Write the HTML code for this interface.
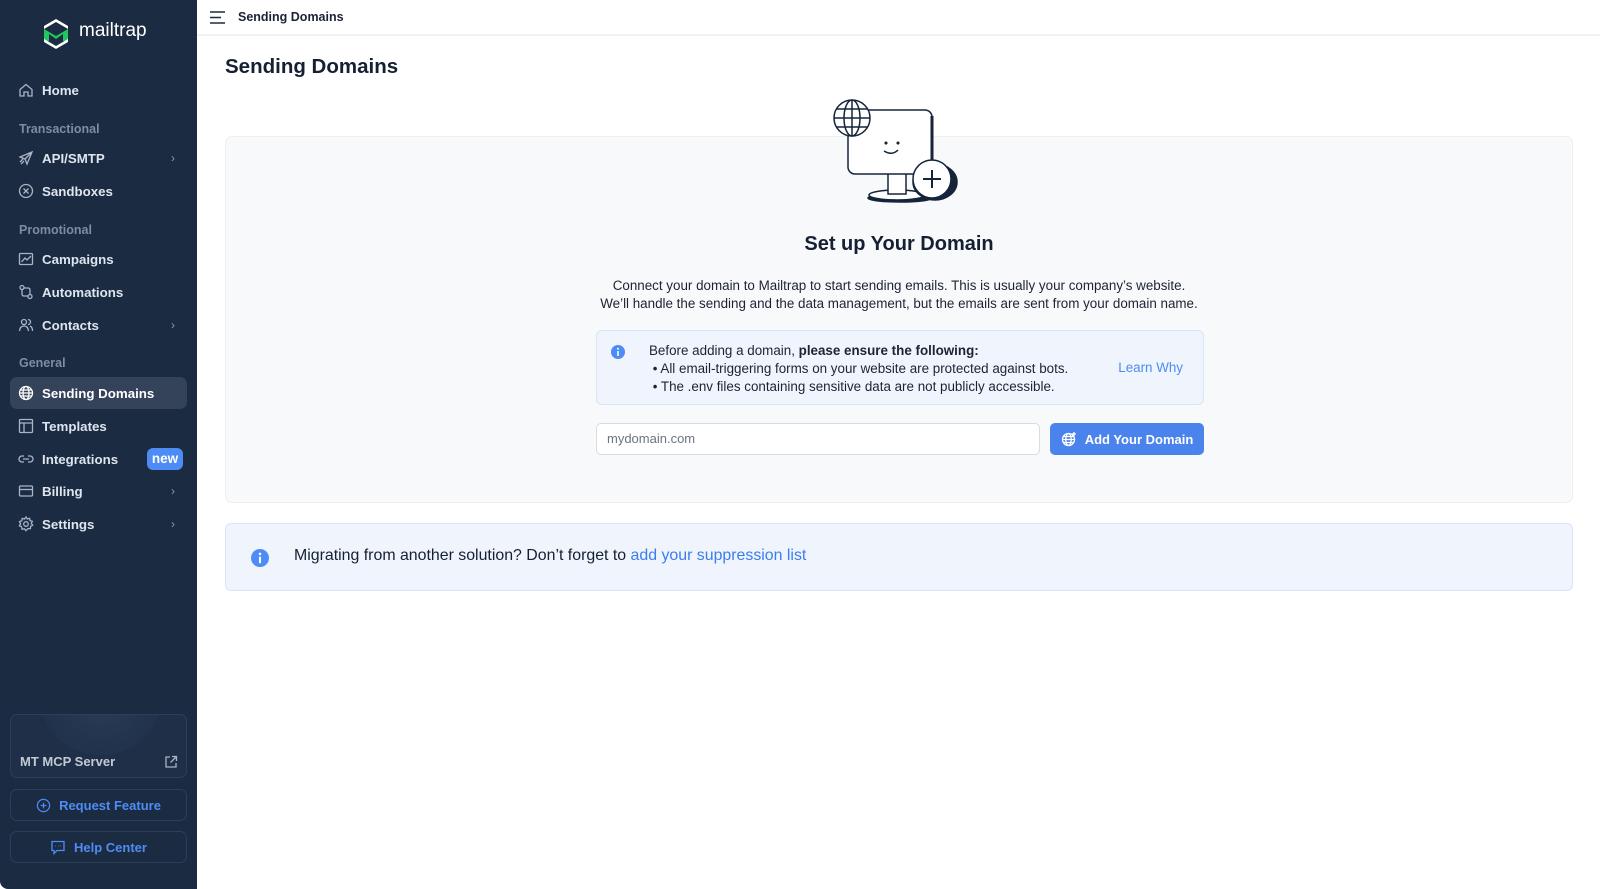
<!DOCTYPE html>
<html><head><meta charset="utf-8">
<style>
*{box-sizing:border-box;margin:0;padding:0}
body{width:1600px;height:889px;overflow:hidden;background:#fff;font-family:"Liberation Sans",sans-serif;color:#0f1b2d;position:relative}
.sb{position:absolute;left:0;top:0;width:197px;height:889px;background:#1b2b42;border-bottom-left-radius:8px}
.sb .it{position:absolute;left:10px;width:177px;height:32px;display:flex;align-items:center;padding-left:8px;color:#dfe5ee;font-size:13.3px;font-weight:bold;border-radius:7px}
.sb .it svg{width:16px;height:16px;margin-right:8px;flex:none}
.sb .it .ch{position:absolute;right:12px;color:#8c99ab;font-size:12px;font-weight:normal}
.sb .sec{position:absolute;left:19px;color:#7f8c9f;font-size:12.5px;font-weight:bold}
.sb .act{background:#34425a;color:#fff}
.new{position:absolute;left:147px;top:448px;width:36px;height:22px;border-radius:6px;background:#4e8cf5;color:#fff;font-size:13.5px;font-weight:bold;text-align:center;line-height:22px}
.box{position:absolute;left:10px;width:177px;border:1px solid #2e3e56;border-radius:7px}
.top{position:absolute;left:197px;top:0;right:0;height:36px;border-bottom:2px solid #f0f1f3}
.card{position:absolute;left:225px;top:136px;width:1348px;height:367px;background:#f8f9fa;border:1px solid #eeeff1;border-radius:7px}
.ban{position:absolute;left:225px;top:523px;width:1348px;height:68px;background:#eff4fd;border:1px solid #d9e4f7;border-radius:6px}
.c{position:absolute;left:0;width:100%;text-align:center}
</style></head><body>
<div class="sb">
  <svg style="position:absolute;left:40px;top:17px" width="32" height="33" viewBox="0 0 32 33"><path d="M16 2 L28 9 L28 12 L16 5 L4 12 L4 9Z" fill="#fff"/><path d="M4 12 L4 24 L9 24 L9 17 L16 22 L23 17 L23 24 L28 24 L28 12 L16 19Z" fill="#22c55e"/><path d="M4 25 L16 32 L28 25 L28 22 L16 29 L4 22Z" fill="#fff"/></svg>
  <div style="position:absolute;left:79px;top:20px;color:#fff;font-size:19px;font-weight:normal">mailtrap</div>
  <div class="it" style="top:74px"><svg viewBox="0 0 16 16" fill="none" stroke="#aab4c3" stroke-width="1.3"><path d="M2 7.5L8 2.5L14 7.5V14H10V10H6V14H2Z"/></svg>Home</div>
  <div class="sec" style="top:122px">Transactional</div>
  <div class="it" style="top:142px"><svg viewBox="0 0 16 16" fill="none" stroke="#aab4c3" stroke-width="1.3"><path d="M14 2L2 7L7 9L9 14Z M7 9L14 2 M2 12L5 9 M3 14L6 11"/></svg>API/SMTP<span class="ch">›</span></div>
  <div class="it" style="top:175px"><svg viewBox="0 0 16 16" fill="none" stroke="#aab4c3" stroke-width="1.3"><circle cx="8" cy="8" r="6.5"/><path d="M5.5 5.5L10.5 10.5M10.5 5.5L5.5 10.5"/></svg>Sandboxes</div>
  <div class="sec" style="top:223px">Promotional</div>
  <div class="it" style="top:243px"><svg viewBox="0 0 16 16" fill="none" stroke="#aab4c3" stroke-width="1.3"><rect x="1.5" y="2.5" width="13" height="11" rx="1"/><path d="M3.5 11L7 7L9 9L13 5"/></svg>Campaigns</div>
  <div class="it" style="top:276px"><svg viewBox="0 0 16 16" fill="none" stroke="#aab4c3" stroke-width="1.3"><circle cx="4" cy="3.5" r="2"/><circle cx="12" cy="12.5" r="2"/><path d="M4 6V10Q4 12 6 12H10M12 10V6Q12 4 10 4H6"/></svg>Automations</div>
  <div class="it" style="top:309px"><svg viewBox="0 0 16 16" fill="none" stroke="#aab4c3" stroke-width="1.3"><circle cx="6" cy="5" r="2.5"/><path d="M1.5 14Q2 9 6 9Q10 9 10.5 14M10 2.5A2.5 2.5 0 0 1 10 7.5M12 9Q14.5 10 14.5 14"/></svg>Contacts<span class="ch">›</span></div>
  <div class="sec" style="top:356px">General</div>
  <div class="it act" style="top:377px"><svg viewBox="0 0 16 16" fill="none" stroke="#fff" stroke-width="1.3"><circle cx="8" cy="8" r="6.5"/><ellipse cx="8" cy="8" rx="3" ry="6.5"/><path d="M1.5 8H14.5M2.5 5H13.5M2.5 11H13.5"/></svg>Sending Domains</div>
  <div class="it" style="top:410px"><svg viewBox="0 0 16 16" fill="none" stroke="#aab4c3" stroke-width="1.3"><rect x="1.5" y="1.5" width="13" height="13" rx="1"/><path d="M1.5 5H14.5M6 5V14.5"/></svg>Templates</div>
  <div class="it" style="top:443px"><svg viewBox="0 0 16 16" fill="none" stroke="#aab4c3" stroke-width="1.3"><path d="M6 5H4A3 3 0 0 0 4 11H6M10 5H12A3 3 0 0 1 12 11H10M5 8H11"/></svg>Integrations</div>
  <div class="new">new</div>
  <div class="it" style="top:475px"><svg viewBox="0 0 16 16" fill="none" stroke="#aab4c3" stroke-width="1.3"><rect x="1.5" y="3" width="13" height="10" rx="1"/><path d="M1.5 6.5H14.5"/></svg>Billing<span class="ch">›</span></div>
  <div class="it" style="top:508px"><svg viewBox="0 0 16 16" fill="none" stroke="#aab4c3" stroke-width="1.3"><circle cx="8" cy="8" r="2.3"/><path d="M8 1L9.3 3L11.6 2.3L12 4.6L14.3 5.3L13.3 7.4L14.7 9.3L12.6 10.3L12.4 12.7L10 12.5L8 14.7L6.4 12.8L4 13.2L3.6 10.8L1.4 9.8L2.6 7.8L1.5 5.6L3.8 4.8L4.2 2.4L6.5 3Z"/></svg>Settings<span class="ch">›</span></div>
  <div class="box" style="top:714px;height:64px;overflow:hidden;background:#1e2f47">
    <div style="position:absolute;left:30px;top:-70px;width:120px;height:110px;border-radius:50%;background:radial-gradient(circle,#2a3c56 0%,#22344d 60%,#1e2f47 100%)"></div>
    <div style="position:absolute;left:9px;top:39px;color:#c3cad5;font-size:13px;font-weight:bold">MT MCP Server</div>
    <svg style="position:absolute;left:153px;top:40px" width="14" height="14" viewBox="0 0 14 14" fill="none" stroke="#aab4c3" stroke-width="1.3"><path d="M6 2H2V12H12V8M8 1.5H12.5V6M12.5 1.5L6.5 7.5"/></svg>
  </div>
  <div class="box" style="top:789px;height:32px;display:flex;align-items:center;justify-content:center;color:#4e8cf5;font-size:13px;font-weight:bold"><svg width="15" height="15" viewBox="0 0 16 16" fill="none" stroke="#4e8cf5" stroke-width="1.3" style="margin-right:8px"><circle cx="8" cy="8" r="6.5"/><path d="M8 5V11M5 8H11"/></svg>Request Feature</div>
  <div class="box" style="top:831px;height:32px;display:flex;align-items:center;justify-content:center;color:#4e8cf5;font-size:13px;font-weight:bold"><svg width="16" height="15" viewBox="0 0 16 15" fill="none" stroke="#4e8cf5" stroke-width="1.3" style="margin-right:8px"><path d="M2 1.5H14V10.5H7L4 13.5V10.5H2Z"/><path d="M5.5 6H6M8 6H8.5M10 6H10.5"/></svg>Help Center</div>
</div>
<div class="top">
  <svg style="position:absolute;left:13px;top:11px" width="16" height="13" viewBox="0 0 16 13" stroke="#1b2b42" stroke-width="1.5"><path d="M0 1H15M0 6.5H11M0 12H15"/></svg>
  <div style="position:absolute;left:41px;top:10px;font-size:12.5px;font-weight:bold;color:#1b2233">Sending Domains</div>
</div>
<div style="position:absolute;left:225px;top:55px;font-size:20.5px;font-weight:bold;color:#152033">Sending Domains</div>
<div class="card">
  <div class="c" style="top:96px;font-size:20px;font-weight:bold;color:#152033">Set up Your Domain</div>
  <div class="c" style="top:140px;font-size:13.4px;line-height:18px;color:#1c2433">Connect your domain to Mailtrap to start sending emails. This is usually your company’s website.<br>We’ll handle the sending and the data management, but the emails are sent from your domain name.</div>
  <div style="position:absolute;left:370px;top:193px;width:608px;height:75px;background:#eff4fd;border:1px solid #d9e4f7;border-radius:6px;font-size:13.4px;color:#1c2433">
    <svg style="position:absolute;left:14px;top:14px" width="14" height="14" viewBox="0 0 14 14"><circle cx="7" cy="7" r="7" fill="#4e8cf5"/><rect x="6.2" y="6" width="1.6" height="5" fill="#fff"/><circle cx="7" cy="3.8" r="1" fill="#fff"/></svg>
    <div style="position:absolute;left:52px;top:11px;line-height:18px">Before adding a domain, <b>please ensure the following:</b><br>&nbsp;• All email-triggering forms on your website are protected against bots.<br>&nbsp;• The .env files containing sensitive data are not publicly accessible.</div>
    <div style="position:absolute;right:20px;top:29px;color:#4e8cf5;font-size:13.4px">Learn Why</div>
  </div>
  <div style="position:absolute;left:370px;top:286px;width:444px;height:32px;background:#fff;border:1px solid #d8dbe0;border-radius:5px;padding-left:10px;line-height:30px;font-size:13px;color:#6b7483">mydomain.com</div>
  <div style="position:absolute;left:824px;top:286px;width:154px;height:32px;background:#4a83ec;border-radius:5px;color:#fff;font-size:13px;font-weight:bold;display:flex;align-items:center;justify-content:center"><svg width="16" height="16" viewBox="0 0 16 16" fill="none" stroke="#fff" stroke-width="1.3" style="margin-right:8px"><circle cx="7.5" cy="8.5" r="6"/><ellipse cx="7.5" cy="8.5" rx="2.7" ry="6"/><path d="M1.5 8.5H13.5M2.5 5.5H12.5M2.5 11.5H12.5M13 1V5M11 3H15"/></svg>Add Your Domain</div>
</div>
<svg style="position:absolute;left:830px;top:98px" width="140" height="106" viewBox="0 0 140 106" fill="none" stroke="#15243a" stroke-width="1.5">
  <ellipse cx="70" cy="100" rx="32" ry="4" fill="#15243a"/>
  <ellipse cx="67" cy="97" rx="28" ry="5" fill="#fff"/>
  <rect x="58" y="74" width="18" height="22" fill="#fff"/>
  <rect x="18" y="12" width="84" height="64" rx="7" fill="#fff"/>
  <path d="M102 18V74" stroke-width="3"/>
  <circle cx="22" cy="20" r="18" fill="#fff"/>
  <ellipse cx="22" cy="20" rx="8" ry="18"/><path d="M4 20H40M6 11H38M6 29H38M22 2V38"/>
  <circle cx="56" cy="45" r="0.8" fill="#15243a"/><circle cx="68" cy="45" r="0.8" fill="#15243a"/>
  <path d="M54 53Q62 58 68 52"/>
  <ellipse cx="105" cy="84" rx="22" ry="18" fill="#15243a"/>
  <circle cx="102" cy="81" r="19" fill="#fff"/>
  <path d="M102 72V90M93 81H111" stroke-width="2"/>
</svg>
<div class="ban">
  <svg style="position:absolute;left:25px;top:25px" width="18" height="18" viewBox="0 0 14 14"><circle cx="7" cy="7" r="7" fill="#4e8cf5"/><rect x="6.2" y="6" width="1.6" height="5" fill="#fff"/><circle cx="7" cy="3.8" r="1" fill="#fff"/></svg>
  <div style="position:absolute;left:68px;top:23px;font-size:15.9px;color:#152033">Migrating from another solution? Don’t forget to <span style="color:#3b7df0">add your suppression list</span></div>
</div>
</body></html>
